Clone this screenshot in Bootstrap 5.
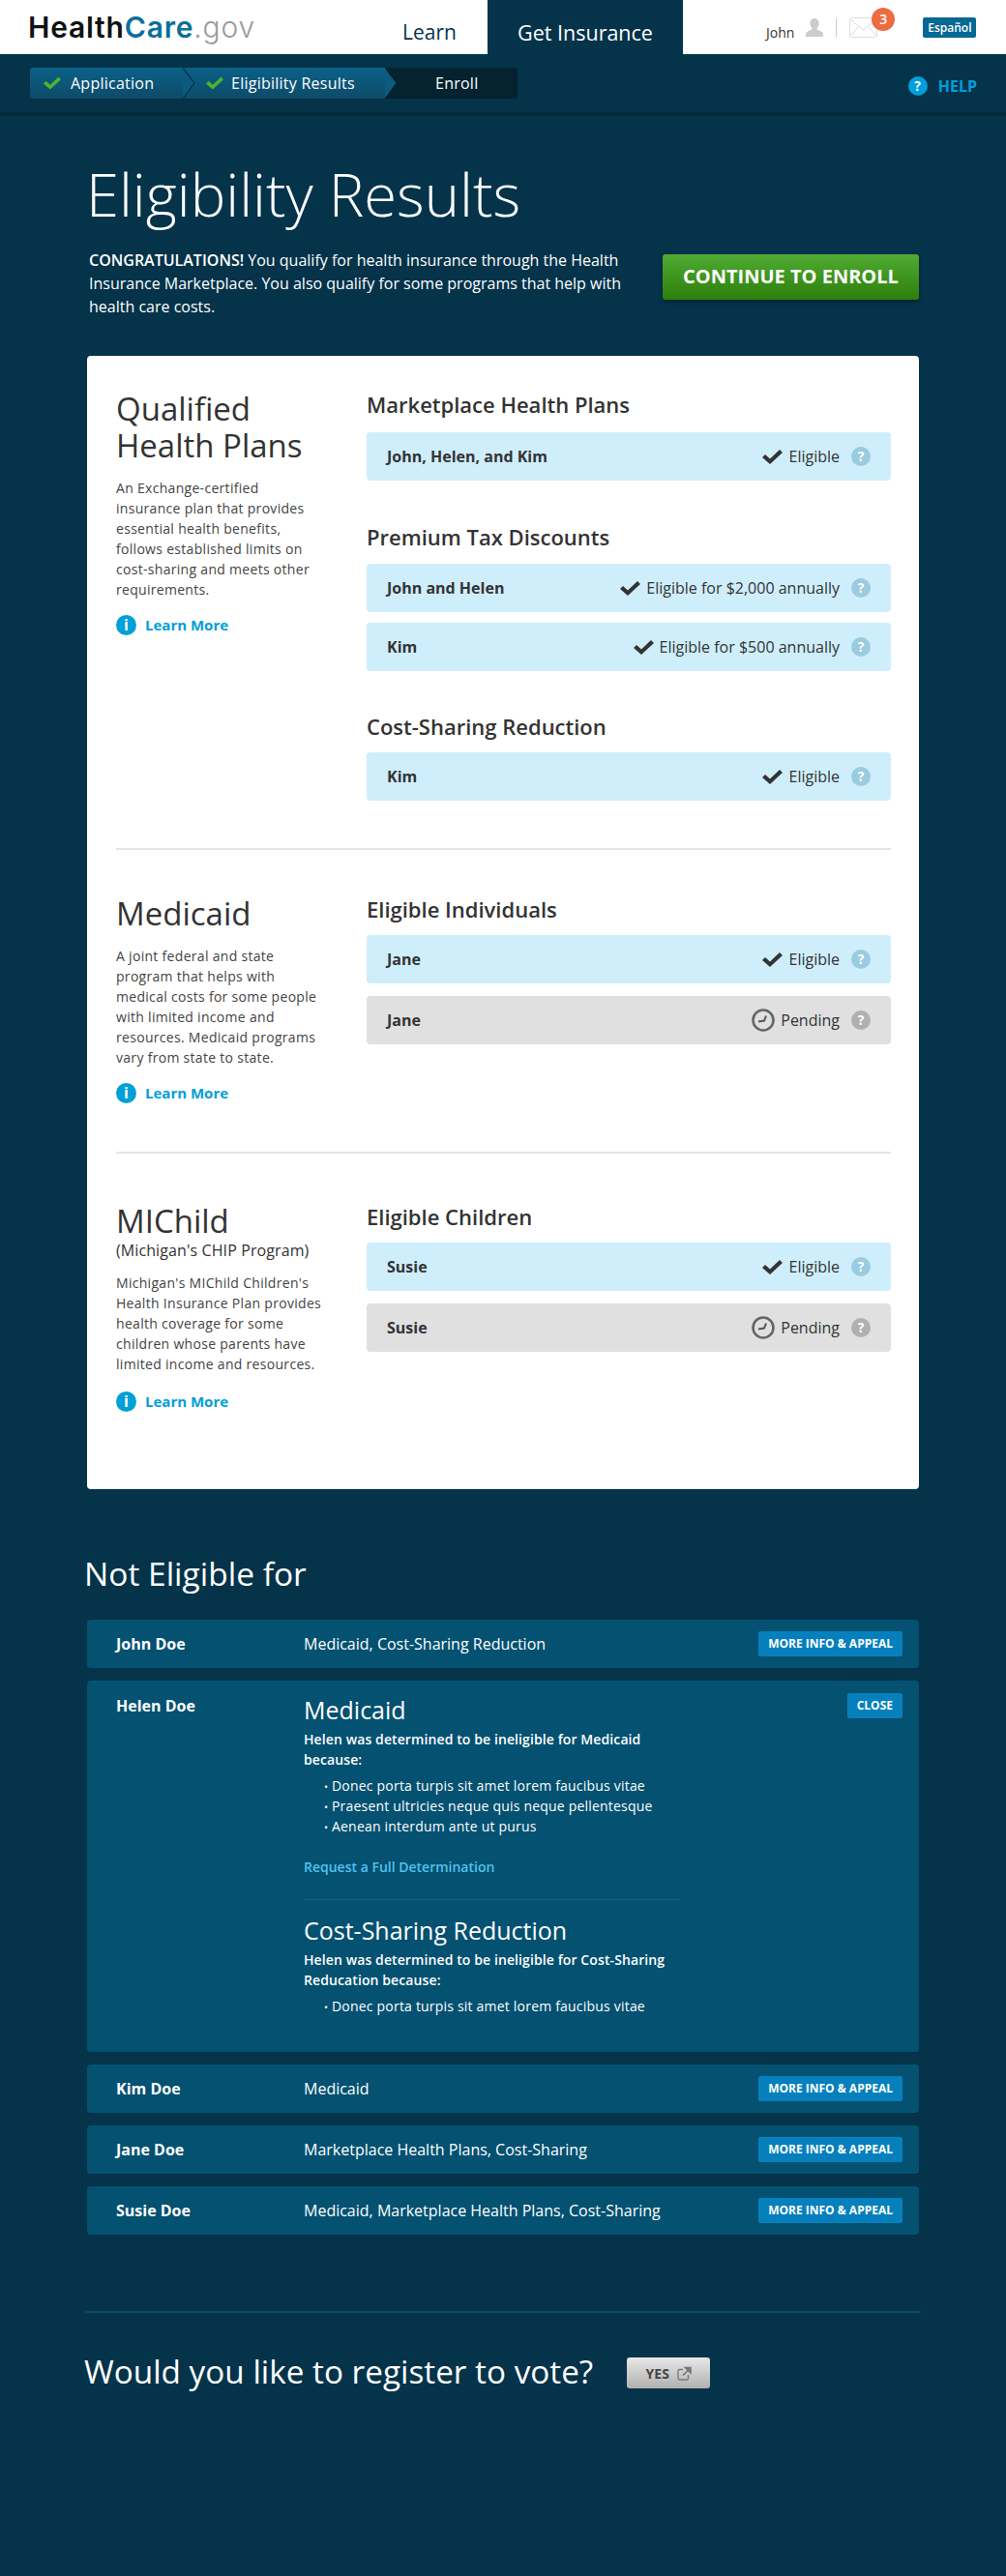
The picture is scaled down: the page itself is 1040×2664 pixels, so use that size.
<!DOCTYPE html>
<html lang="en">
<head>
    <meta charset="UTF-8">
    <title>Eligibility Results</title>
    <link href="https://cdn.jsdelivr.net/npm/bootstrap@5.3.0/dist/css/bootstrap.min.css" rel="stylesheet">
    <style>
        html, body { background: #05334a; }
        body { font-family: "Open Sans", "Liberation Sans", sans-serif; font-size: 14px; color: #333; min-height: 2664px; }

        /* top bar */
        .top-bar { height: 56px; background: #fff; }
        .logo { width: 416px; padding-left: 29px; font-family: Inter, "Liberation Sans", sans-serif; font-size: 30px; line-height: 56px; letter-spacing: .8px; font-weight: 600; color: #111; }
        .logo-care { color: #0a6f9d; }
        .logo-gov { color: #9a9a9a; font-weight: 300; }
        .learn-tab { width: 88px; font-size: 21px; line-height: 67px; color: #05334a; }
        .insurance-tab { width: 202px; background: #05334a; color: #fff; font-size: 21.5px; line-height: 67px; text-align: center; }
        .user-name { font-size: 14px; margin-top: 10px; margin-left: 86px; }
        .user-icon { margin-left: 12px; }
        .user-sep { width: 1px; height: 19px; background: #ccc; margin: 0 13px; }
        .mail-wrap { width: 29px; height: 21px; }
        .mail-badge { top: -10px; left: 23px; width: 24px; height: 24px; border-radius: 50%; background: #ee6c43; color: #fff; font-size: 14px; font-weight: 600; line-height: 24px; text-align: center; }
        .lang-btn { width: 55px; height: 21px; margin-left: 47px; background: #066894; color: #fff; border-radius: 2px; font-size: 12px; font-weight: 600; line-height: 21px; text-align: center; }

        /* progress bar */
        .step-bar { height: 64px; padding: 14px 30px 0 31px; border-bottom: 4px solid #042a3c; }
        .step-list { width: 504px; height: 32px; background: #04222f; border-radius: 3px; color: #fff; font-size: 16px; font-weight: 500; letter-spacing: .25px; line-height: 32px; }
        .step-item { height: 32px; background: linear-gradient(#0a6188, #0e4a68); }
        .step-item svg.step-tip { position: absolute; top: 0; left: 100%; z-index: 2; }
        .step-one { width: 158px; padding-left: 14px; border-radius: 3px 0 0 3px; }
        .step-one-label { margin-left: 2px; }
        .step-two { width: 209px; padding-left: 24px; }
        .step-three { width: 137px; padding-left: 52px; }
        .help-link { color: #00a0dc; font-size: 16px; font-weight: 700; margin-top: -8px; }
        .help-dot { width: 20px; height: 20px; background: #00a0dc; border-radius: 50%; color: #fff; font-size: 14px; font-weight: 700; line-height: 20px; text-align: center; margin-right: 11px; }

        /* hero */
        .hero { padding: 0 90px 0 92px; }
        .hero-title { font-size: 61.500px; font-weight: 300; line-height: 82px; color: #fff; margin: 39px 0 16px -3px; }
        .hero-copy { width: 570px; font-size: 16px; line-height: 24px; color: #fff; margin: 0; }
        .hero-copy strong { font-weight: 600; }
        .enroll-btn { width: 265px; height: 47px; margin-top: 6px; background: linear-gradient(#50ab33, #2c7f0a); border-radius: 3px; box-shadow: 0 2px 4px rgba(0,0,0,.35); color: #fff; font-size: 20px; font-weight: 700; line-height: 46px; text-align: center; }

        /* white card */
        .plans-card { margin: 39px 90px 0; padding: 0 29px 0 30px; background: #fff; border-radius: 4px; }
        .plan-section { padding-top: 36px; padding-bottom: 49px; }
        .plan-section + .plan-section { border-top: 2px solid #e5e5e5; }
        .plan-medicaid { padding-top: 47px; padding-bottom: 50px; }
        .plan-child { padding-top: 51px; padding-bottom: 80px; }
        .plan-side { width: 260px; flex: none; padding-right: 45px; }
        .plan-main { flex: 1; margin-left: -1px; }
        .plan-name { font-size: 33px; line-height: 38px; font-weight: 400; color: #333; margin: 0; }
        .plan-sub { font-size: 16px; line-height: 22px; font-weight: 500; letter-spacing: .1px; }
        .plan-text { font-size: 14px; line-height: 21px; letter-spacing: .3px; color: #444; margin: 14px 0 15px; }
        .plan-child .plan-text { margin: 12px 0 17px; }
        .learn-link { font-size: 15px; font-weight: 700; line-height: 22px; color: #00a0d8; text-decoration: none; }
        .info-dot { width: 21px; height: 21px; background: #00a0d8; border-radius: 50%; color: #fff; font-size: 16px; font-weight: 700; line-height: 21px; text-align: center; margin-right: 9px; }
        .group-title { font-size: 22px; line-height: 28px; font-weight: 600; color: #333; margin: 0 0 13px; }
        .group-first { margin-bottom: 15px; }
        .group-tax { margin: 44px 0 14px; }
        .group-cost { margin-top: 43px; }
        .status-row { height: 50px; padding: 0 21px; border-radius: 4px; font-size: 16px; }
        .status-row b { font-weight: 700; }
        .status-ok { background: #cfeefc; }
        .status-wait { background: #e0e0e0; }
        .status-gap { margin-bottom: 11px; }
        .status-gap-wide { margin-bottom: 13px; }
        .status-label { margin: 0 12px 0 6px; }
        .hint-dot { width: 20px; height: 20px; border-radius: 50%; color: #fff; font-size: 14px; font-weight: 700; line-height: 20px; text-align: center; }
        .status-ok .hint-dot { background: #9bcbe0; }
        .status-wait .hint-dot { background: #b0b0b0; }

        /* not eligible */
        .ne-title { font-size: 33.500px; line-height: 40px; font-weight: 500; color: #fff; margin: 67px 0 28px 87px; }
        .ne-list { margin: 0 90px; color: #fff; }
        .ne-row { min-height: 50px; padding: 0 17px 0 30px; margin-bottom: 13px; background: #045171; border-radius: 4px; font-size: 16px; }
        .ne-name { width: 194px; flex: none; font-weight: 700; font-size: 16px; }
        .ne-btn { height: 26px; padding: 0 10px; background: #0680bd; color: #fff; border-radius: 2px; font-size: 12px; font-weight: 700; line-height: 26px; white-space: nowrap; }
        .ne-open { padding-top: 13px; padding-bottom: 37px; }
        .ne-open .ne-name { line-height: 24px; margin-top: 1px; }
        .ne-detail { width: 389px; font-size: 14px; line-height: 21px; }
        .ne-detail h3 { font-size: 25px; line-height: 30px; font-weight: 500; margin: 2px 0 5px; }
        .ne-detail p { font-weight: 600; letter-spacing: .1px; margin: 0 0 6px; }
        .ne-detail ul { margin: 0; padding-left: 29px; list-style: none; letter-spacing: .2px; }
        .ne-detail li::before { content: "•"; display: inline-block; width: 8px; margin-left: -8px; font-size: 11px; line-height: 1; }
        .ne-request { display: block; margin-top: 21px; color: #4fc3f0; font-weight: 600; text-decoration: none; }
        .ne-split { height: 1px; background: #0d6488; margin: 23px 0 16px; }

        /* vote */
        .vote-box { margin: 79px 88px 0; padding-top: 38px; border-top: 2px solid #0b4a66; }
        .vote-title { font-size: 33.300px; line-height: 44px; font-weight: 500; color: #fff; margin: 0 35px 0 -1px; }
        .yes-btn { width: 86px; height: 32px; margin-top: 4px; background: linear-gradient(#e8e8e8, #b0b0b0); border-radius: 3px; color: #444; font-size: 14px; font-weight: 700; }
    </style>
</head>
<body>

<div class="top-bar d-flex">
    <div class="logo">Health<span class="logo-care">Care</span><span class="logo-gov">.gov</span></div>
    <div class="learn-tab">Learn</div>
    <div class="insurance-tab">Get Insurance</div>
    <div class="d-flex align-items-center">
        <span class="user-name">John</span>
        <svg class="user-icon" width="18" height="19" viewBox="0 0 18 19"><path fill="#ccc" d="M9 0c3 0 4.600 2.300 4.600 5.200 0 2-.8 3.700-2 4.800v1.500c1.500.9 6.400 2 6.400 5.200V19H0v-2.300c0-3.200 4.900-4.300 6.400-5.200V10c-1.200-1.100-2-2.800-2-4.800C4.400 2.300 6 0 9 0z"/></svg>
        <span class="user-sep"></span>
        <span class="mail-wrap position-relative">
            <svg class="d-block" width="29" height="21" viewBox="0 0 29 21"><rect x=".5" y=".5" width="28" height="20" rx="2" fill="#fff" stroke="#ddd"/><path d="M1 2l13.500 11L28 2M1 19l8-9M28 19l-8-9" fill="none" stroke="#ddd"/></svg>
            <span class="mail-badge position-absolute">3</span>
        </span>
        <span class="lang-btn">Español</span>
    </div>
</div>

<div class="step-bar d-flex justify-content-between">
    <div class="step-list d-flex">
        <div class="step-item step-one position-relative d-flex align-items-center">
            <svg class="me-2" width="18" height="14" viewBox="0 0 21 15"><path fill="#4ab52c" d="M0 8l3-3 5 4.500L18 0l3 3-13 12z"/></svg>
            <span class="step-one-label">Application</span>
            <svg class="step-tip" width="12" height="32" viewBox="0 0 12 32"><polygon points="0,0 12,16 0,32" fill="#0c5a7e"/><polyline points="0,0 12,16 0,32" fill="none" stroke="#04222f"/></svg>
        </div>
        <div class="step-item step-two position-relative d-flex align-items-center">
            <svg class="me-2" width="18" height="14" viewBox="0 0 21 15"><path fill="#4ab52c" d="M0 8l3-3 5 4.500L18 0l3 3-13 12z"/></svg>
            <span>Eligibility Results</span>
            <svg class="step-tip" width="12" height="32" viewBox="0 0 12 32"><polygon points="0,0 12,16 0,32" fill="#0c5a7e"/><polyline points="0,0 12,16 0,32" fill="none" stroke="#04222f"/></svg>
        </div>
        <div class="step-three">Enroll</div>
    </div>
    <div class="help-link d-flex align-items-center">
        <span class="help-dot">?</span>HELP
    </div>
</div>

<div class="hero">
    <h1 class="hero-title">Eligibility Results</h1>
    <div class="d-flex justify-content-between align-items-start">
        <p class="hero-copy"><strong>CONGRATULATIONS!</strong> You qualify for health insurance through the Health Insurance Marketplace. You also qualify for some programs that help with health care costs.</p>
        <div class="enroll-btn">CONTINUE TO ENROLL</div>
    </div>
</div>

<div class="plans-card">
    <section class="plan-section d-flex">
        <div class="plan-side">
            <h2 class="plan-name">Qualified Health Plans</h2>
            <p class="plan-text">An Exchange-certified insurance plan that provides essential health benefits, follows established limits on cost-sharing and meets other requirements.</p>
            <a class="learn-link d-flex align-items-center" href="#"><span class="info-dot">i</span>Learn More</a>
        </div>
        <div class="plan-main">
            <h3 class="group-title group-first">Marketplace Health Plans</h3>
            <div class="status-row status-ok d-flex align-items-center">
                <b>John, Helen, and Kim</b>
                <svg class="ms-auto" width="21" height="15" viewBox="0 0 21 15"><path fill="#333" d="M0 8l3-3 5 4.500L18 0l3 3-13 12z"/></svg>
                <span class="status-label">Eligible</span><span class="hint-dot">?</span>
            </div>

            <h3 class="group-title group-tax">Premium Tax Discounts</h3>
            <div class="status-row status-ok d-flex align-items-center status-gap">
                <b>John and Helen</b>
                <svg class="ms-auto" width="21" height="15" viewBox="0 0 21 15"><path fill="#333" d="M0 8l3-3 5 4.500L18 0l3 3-13 12z"/></svg>
                <span class="status-label">Eligible for $2,000 annually</span><span class="hint-dot">?</span>
            </div>
            <div class="status-row status-ok d-flex align-items-center">
                <b>Kim</b>
                <svg class="ms-auto" width="21" height="15" viewBox="0 0 21 15"><path fill="#333" d="M0 8l3-3 5 4.500L18 0l3 3-13 12z"/></svg>
                <span class="status-label">Eligible for $500 annually</span><span class="hint-dot">?</span>
            </div>

            <h3 class="group-title group-cost">Cost-Sharing Reduction</h3>
            <div class="status-row status-ok d-flex align-items-center">
                <b>Kim</b>
                <svg class="ms-auto" width="21" height="15" viewBox="0 0 21 15"><path fill="#333" d="M0 8l3-3 5 4.500L18 0l3 3-13 12z"/></svg>
                <span class="status-label">Eligible</span><span class="hint-dot">?</span>
            </div>
        </div>
    </section>

    <section class="plan-section plan-medicaid d-flex">
        <div class="plan-side">
            <h2 class="plan-name">Medicaid</h2>
            <p class="plan-text">A joint federal and state program that helps with medical costs for some people with limited income and resources. Medicaid programs vary from state to state.</p>
            <a class="learn-link d-flex align-items-center" href="#"><span class="info-dot">i</span>Learn More</a>
        </div>
        <div class="plan-main">
            <h3 class="group-title">Eligible Individuals</h3>
            <div class="status-row status-ok d-flex align-items-center status-gap-wide">
                <b>Jane</b>
                <svg class="ms-auto" width="21" height="15" viewBox="0 0 21 15"><path fill="#333" d="M0 8l3-3 5 4.500L18 0l3 3-13 12z"/></svg>
                <span class="status-label">Eligible</span><span class="hint-dot">?</span>
            </div>
            <div class="status-row status-wait d-flex align-items-center">
                <b>Jane</b>
                <svg class="ms-auto" width="24" height="24" viewBox="0 0 24 24"><circle cx="12" cy="12" r="10.500" fill="none" stroke="#666" stroke-width="2.600"/><path d="M7 13.500L13 12.500 15 7.500" fill="none" stroke="#555" stroke-width="2"/></svg>
                <span class="status-label">Pending</span><span class="hint-dot">?</span>
            </div>
        </div>
    </section>

    <section class="plan-section plan-child d-flex">
        <div class="plan-side">
            <h2 class="plan-name">MIChild</h2>
            <div class="plan-sub">(Michigan's CHIP Program)</div>
            <p class="plan-text">Michigan's MIChild Children's Health Insurance Plan provides health coverage for some children whose parents have limited income and resources.</p>
            <a class="learn-link d-flex align-items-center" href="#"><span class="info-dot">i</span>Learn More</a>
        </div>
        <div class="plan-main">
            <h3 class="group-title">Eligible Children</h3>
            <div class="status-row status-ok d-flex align-items-center status-gap-wide">
                <b>Susie</b>
                <svg class="ms-auto" width="21" height="15" viewBox="0 0 21 15"><path fill="#333" d="M0 8l3-3 5 4.500L18 0l3 3-13 12z"/></svg>
                <span class="status-label">Eligible</span><span class="hint-dot">?</span>
            </div>
            <div class="status-row status-wait d-flex align-items-center">
                <b>Susie</b>
                <svg class="ms-auto" width="24" height="24" viewBox="0 0 24 24"><circle cx="12" cy="12" r="10.500" fill="none" stroke="#666" stroke-width="2.600"/><path d="M7 13.500L13 12.500 15 7.500" fill="none" stroke="#555" stroke-width="2"/></svg>
                <span class="status-label">Pending</span><span class="hint-dot">?</span>
            </div>
        </div>
    </section>
</div>

<h2 class="ne-title">Not Eligible for</h2>
<div class="ne-list">
    <div class="ne-row d-flex align-items-center">
        <span class="ne-name">John Doe</span><span>Medicaid, Cost-Sharing Reduction</span>
        <span class="ne-btn ms-auto">MORE INFO &amp; APPEAL</span>
    </div>
    <div class="ne-row ne-open d-flex align-items-start">
        <span class="ne-name">Helen Doe</span>
        <div class="ne-detail">
            <h3>Medicaid</h3>
            <p>Helen was determined to be ineligible for Medicaid because:</p>
            <ul>
                <li>Donec porta turpis sit amet lorem faucibus vitae</li>
                <li>Praesent ultricies neque quis neque pellentesque</li>
                <li>Aenean interdum ante ut purus</li>
            </ul>
            <a class="ne-request" href="#">Request a Full Determination</a>
            <div class="ne-split"></div>
            <h3>Cost-Sharing Reduction</h3>
            <p>Helen was determined to be ineligible for Cost-Sharing Reducation because:</p>
            <ul>
                <li>Donec porta turpis sit amet lorem faucibus vitae</li>
            </ul>
        </div>
        <span class="ne-btn ms-auto">CLOSE</span>
    </div>
    <div class="ne-row d-flex align-items-center">
        <span class="ne-name">Kim Doe</span><span>Medicaid</span>
        <span class="ne-btn ms-auto">MORE INFO &amp; APPEAL</span>
    </div>
    <div class="ne-row d-flex align-items-center">
        <span class="ne-name">Jane Doe</span><span>Marketplace Health Plans, Cost-Sharing</span>
        <span class="ne-btn ms-auto">MORE INFO &amp; APPEAL</span>
    </div>
    <div class="ne-row d-flex align-items-center">
        <span class="ne-name">Susie Doe</span><span>Medicaid, Marketplace Health Plans, Cost-Sharing</span>
        <span class="ne-btn ms-auto">MORE INFO &amp; APPEAL</span>
    </div>
</div>

<div class="vote-box d-flex align-items-center">
    <h2 class="vote-title">Would you like to register to vote?</h2>
    <div class="yes-btn d-flex align-items-center justify-content-center gap-2">
        YES
        <svg width="15" height="15" viewBox="0 0 15 15"><path d="M11.500 9v3.500a1.500 1.500 0 0 1-1.500 1.500H2.500A1.500 1.500 0 0 1 1 12.500V5a1.500 1.500 0 0 1 1.500-1.500H6" fill="none" stroke="#777" stroke-width="1.300"/><path d="M6 9.500L11 4.500M8.500 1.500H14V7z" fill="#777" stroke="#777" stroke-width="1.600"/></svg>
    </div>
</div>

<script src="https://cdn.jsdelivr.net/npm/bootstrap@5.3.0/dist/js/bootstrap.bundle.min.js"></script>
</body>
</html>
